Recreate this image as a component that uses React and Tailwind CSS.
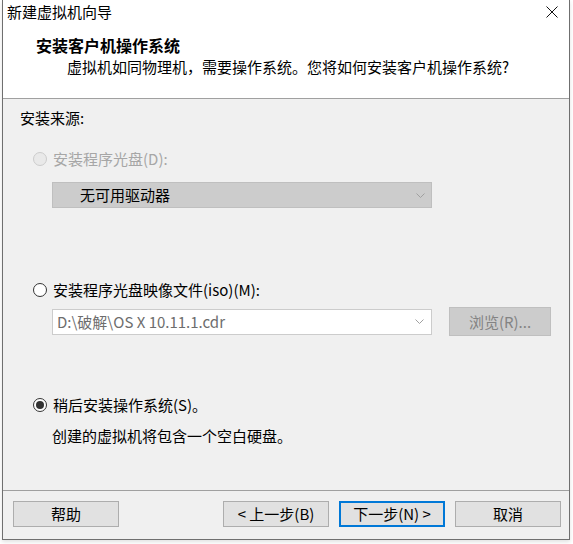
import React from 'react';

const font = { fontFamily: '"Noto Sans CJK SC", "Noto Sans", sans-serif' };

function Radio({ checked, disabled }) {
  if (disabled) {
    return (
      <span className="w-[14px] h-[14px] rounded-full border border-[#cccccc] bg-[#e9e9e9] shrink-0" />
    );
  }
  return (
    <span className="w-[14px] h-[14px] rounded-full border border-[#333333] bg-white shrink-0 flex items-center justify-center">
      {checked && <span className="w-[8px] h-[8px] rounded-full bg-[#333333]" />}
    </span>
  );
}

function Chevron({ color }) {
  return (
    <svg width="9" height="5" viewBox="0 0 9 5" fill="none">
      <path d="M0.5 0.5L4.5 4.5L8.5 0.5" stroke={color} strokeWidth="1" />
    </svg>
  );
}

function Button({ children, primary }) {
  return (
    <div
      className={`w-[106px] h-[26px] flex items-center justify-center bg-[#e1e1e1] text-[15px] text-black ${
        primary ? 'border-2 border-[#0078d7]' : 'border border-[#adadad]'
      }`}
    >
      {children}
    </div>
  );
}

export default function App() {
  return (
    <div className="w-[573px] h-[544px] bg-white pl-[2px] overflow-hidden" style={font}>
      <div className="w-[568px] h-[540px] border-x border-b border-[#6f6f6f] flex flex-col shadow-[0_2px_4px_rgba(0,0,0,0.12)]">
        {/* Header */}
        <div className="h-[99px] bg-white border-b border-[#a0a0a0] flex flex-col">
          <div className="h-[25px] flex items-start justify-between pl-[4px] pr-[11px] pt-[2px]">
            <span className="text-[15px] leading-[20px] text-black">新建虚拟机向导</span>
            <svg className="mt-[4px]" width="12" height="12" viewBox="0 0 12 12">
              <path d="M0.5 0.5L11.5 11.5M11.5 0.5L0.5 11.5" stroke="#111" strokeWidth="1" />
            </svg>
          </div>
          <div className="pl-[33px] pt-[9px] text-[16px] leading-[22px] font-bold text-black">
            安装客户机操作系统
          </div>
          <div className="pl-[64px] mt-[1px] text-[15px] leading-[20px] text-black">
            虚拟机如同物理机，需要操作系统。您将如何安装客户机操作系统?
          </div>
        </div>

        {/* Body */}
        <div className="flex-1 bg-[#f0f0f0] border-b border-[#a0a0a0] flex flex-col text-[15px] leading-[20px]">
          <div className="pl-[17px] pt-[9px] text-black">安装来源:</div>

          <div className="pl-[30px] mt-[21px] flex items-center gap-[6px] h-[20px]">
            <Radio disabled />
            <span className="text-[#a6a6a6]">安装程序光盘(D):</span>
          </div>
          <div className="ml-[49px] mt-[13px] w-[380px] h-[26px] bg-[#cccccc] border border-[#bfbfbf] flex items-center justify-between pl-[27px] pr-[6px]">
            <span className="text-black">无可用驱动器</span>
            <Chevron color="#a0a0a0" />
          </div>

          <div className="pl-[30px] mt-[72px] flex items-center gap-[6px] h-[20px]">
            <Radio />
            <span className="text-black">安装程序光盘映像文件(iso)(M):</span>
          </div>
          <div className="ml-[49px] mt-[7px] flex items-center gap-[17px]">
            <div className="w-[380px] h-[26px] bg-white border border-[#cccccc] flex items-center">
              <span className="flex-1 pl-[4px] text-[#6d6d6d]">D:\破解\OS X 10.11.1.cdr</span>
              <span className="w-[23px] h-full flex items-center justify-center">
                <Chevron color="#a0a0a0" />
              </span>
            </div>
            <div className="w-[102px] h-[29px] bg-[#cccccc] border border-[#bfbfbf] flex items-center justify-center text-[#838383]">
              浏览(R)...
            </div>
          </div>

          <div className="pl-[30px] mt-[59px] flex items-center gap-[6px] h-[20px]">
            <Radio checked />
            <span className="text-black">稍后安装操作系统(S)。</span>
          </div>
          <div className="pl-[49px] mt-[11px] text-black">创建的虚拟机将包含一个空白硬盘。</div>
        </div>

        {/* Footer */}
        <div className="h-[48px] bg-[#f0f0f0] flex items-start pt-[10px] pl-[10px] pr-[8px]">
          <Button>帮助</Button>
          <div className="flex-1" />
          <div className="flex gap-[10px]">
            <Button>&lt; 上一步(B)</Button>
            <Button primary>下一步(N) &gt;</Button>
            <Button>取消</Button>
          </div>
        </div>
      </div>
    </div>
  );
}
